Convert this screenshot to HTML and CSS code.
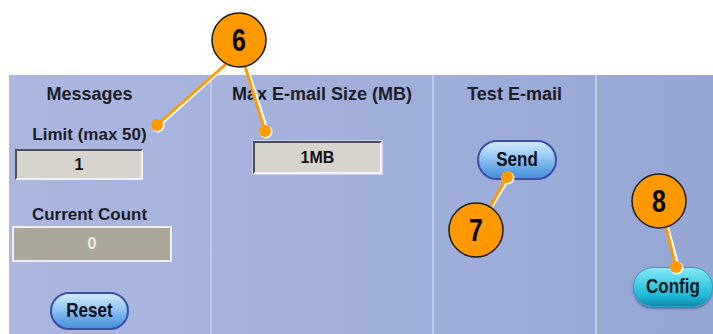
FILE: index.html
```html
<!DOCTYPE html>
<html>

<head>
    <title> E-mail Settings </title>
    <link rel="stylesheet" href="styles.css">
</head>

<body>
    <div id="panel">
        <section class="col col-messages">
            <h2 class="head">Messages</h2>
            <div class="label limit">Limit (max 50)</div>
            <div class="field field-limit">1</div>
            <div class="label count">Current Count</div>
            <div class="readout">0</div>
            <button class="pill reset"><span>Reset</span></button>
        </section>
        <section class="col col-size">
            <h2 class="head">Max E-mail Size (MB)</h2>
            <div class="field field-size">1MB</div>
        </section>
        <section class="col col-test">
            <h2 class="head">Test E-mail</h2>
            <button class="pill send"><span>Send</span></button>
        </section>
        <section class="col col-config">
            <button class="pill config"><span>Config</span></button>
        </section>
    </div>

    <svg id="callouts" width="713" height="334" viewBox="0 0 713 334">
        <g class="edge">
            <line x1="227" y1="64" x2="158" y2="126" />
            <line x1="246" y1="66" x2="267" y2="131" />
            <line x1="491" y1="207" x2="509" y2="177" />
            <line x1="667" y1="227" x2="678" y2="267" />
            <circle cx="158" cy="126" r="6.5" />
            <circle cx="266" cy="132" r="6.5" />
            <circle cx="508" cy="178" r="6.5" />
            <circle cx="677" cy="268" r="6.5" />
        </g>
        <g class="lead">
            <line x1="226" y1="64" x2="157" y2="125" />
            <line x1="245" y1="66" x2="265" y2="131" />
            <line x1="490" y1="207" x2="507" y2="177" />
            <line x1="666" y1="227" x2="676" y2="267" />
            <circle cx="157" cy="125" r="6" />
            <circle cx="265" cy="131" r="6" />
            <circle cx="507" cy="177" r="6" />
            <circle cx="676" cy="267" r="6" />
        </g>
        <g class="badge">
            <circle cx="239" cy="40" r="27" />
            <circle cx="476" cy="230" r="27" />
            <circle cx="659" cy="201" r="27" />
        </g>
        <g class="num">
            <text transform="translate(239 51) scale(0.78 1)">6</text>
            <text transform="translate(476 241) scale(0.78 1)">7</text>
            <text transform="translate(659 212) scale(0.78 1)">8</text>
        </g>
    </svg>
</body>

</html>
```

FILE: styles.css
```css
body {
    margin: 0;
    width: 713px;
    height: 334px;
    overflow: hidden;
    position: relative;
    background: #ffffff;
    font-family: "Liberation Sans", Arial, sans-serif;
    color: #1c1c26;
}

#panel {
    display: flex;
    margin: 75px 0 0 9px;
    height: 259px;
    background: linear-gradient(to right, #abb7df 0%, #a2b0db 45%, #95a6d4 100%);
}

.col {
    display: flex;
    flex-direction: column;
    align-items: center;
    box-sizing: border-box;
    padding-top: 9px;
    border-right: 2px solid #c3cbea;
}

.col-messages {
    width: 203px;
    padding-right: 40px;
}

.col-size {
    width: 225px;
}

.col-test {
    width: 165px;
}

.col-config {
    flex: 1;
    border-right: none;
    align-items: flex-start;
    padding-left: 36px;
}

.head {
    margin: 0;
    font-size: 18px;
    line-height: 20px;
    font-weight: bold;
    white-space: nowrap;
}

.label {
    font-size: 17px;
    line-height: 19px;
    font-weight: bold;
    white-space: nowrap;
}

.limit {
    margin-top: 21px;
}

.count {
    margin-top: 25px;
}

.field {
    box-sizing: border-box;
    display: flex;
    justify-content: center;
    align-items: center;
    background: #d6d3cc;
    border-top: 2px solid #4e4e52;
    border-left: 2px solid #4e4e52;
    border-right: 2px solid #f2f2f6;
    border-bottom: 2px solid #f2f2f6;
    font-size: 16px;
    font-weight: bold;
    color: #111111;
}

.field-limit {
    align-self: flex-start;
    margin: 5px 0 0 6px;
    width: 128px;
    height: 31px;
}

.field-size {
    align-self: flex-start;
    margin: 37px 0 0 41px;
    width: 129px;
    height: 33px;
    outline: 1px solid #c8cfec;
}

.readout {
    align-self: flex-start;
    box-sizing: border-box;
    margin: 2px 0 0 3px;
    width: 160px;
    height: 36px;
    display: flex;
    justify-content: center;
    align-items: center;
    background: #aca899;
    border: 2px solid #eeeef4;
    color: #ecebe4;
    font-size: 16px;
    font-weight: bold;
}

.pill {
    box-sizing: border-box;
    padding: 0;
    font-family: inherit;
    font-size: 17px;
    font-weight: bold;
    color: #101018;
    border-radius: 20px;
    border: 2px solid #3b4ea6;
    background: linear-gradient(#d2e9fc 0%, #9fcdf5 35%, #64a6e6 75%, #4b8fdb 100%);
}

.pill span {
    display: inline-block;
    transform: scaleY(1.18);
}

.reset {
    margin-top: 30px;
    width: 79px;
    height: 38px;
}

.send {
    margin: 36px 0 0 5px;
    width: 80px;
    height: 40px;
}

.config {
    margin-top: 183px;
    width: 80px;
    height: 40px;
    border: 1px solid #2a9cbc;
    background: linear-gradient(#8ae6f4 0%, #45cfe6 40%, #1db6d6 75%, #1088a8 100%);
    color: #0c1a22;
    box-shadow: 0 2px 2px rgba(20, 70, 110, 0.5);
}

#callouts {
    position: absolute;
    top: 0;
    left: 0;
}

.edge line {
    stroke: #ffffff;
    stroke-width: 4;
}

.edge circle {
    fill: #ffffff;
}

.lead line {
    stroke: #ff9900;
    stroke-width: 3;
}

.lead circle {
    fill: #ff9900;
}

.badge circle {
    fill: #ff9900;
    stroke: #1c1c1c;
    stroke-width: 1.5;
}

.num text {
    font-family: "Liberation Sans", Arial, sans-serif;
    font-size: 32px;
    font-weight: bold;
    text-anchor: middle;
    fill: #000000;
}
```
